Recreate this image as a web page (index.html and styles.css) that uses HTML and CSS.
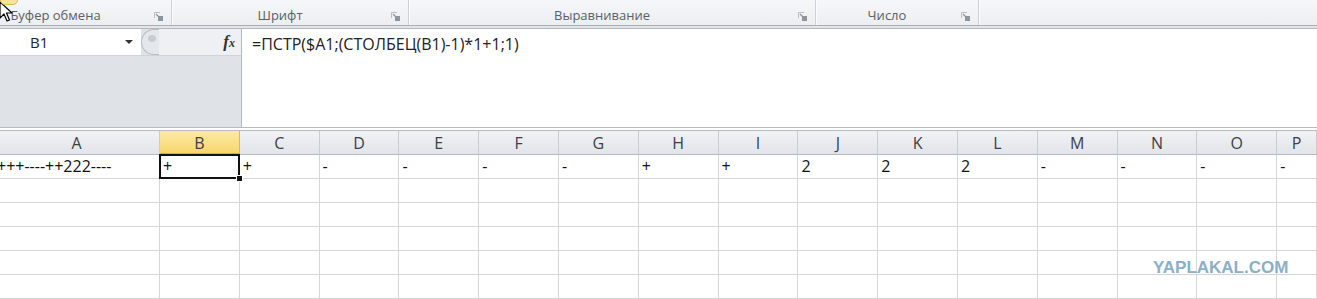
FILE: index.html
```html
<!DOCTYPE html>
<html lang="ru">
<head>
    <meta charset="UTF-8">
    <title>Книга1 - Excel</title>
    <link rel="stylesheet" href="styles.css">
</head>
<body>
    <div class="window">
        <div class="ribbon">
            <div class="group g-clip">
                <span class="group-label">Буфер обмена</span>
                <span class="launcher"><svg width="9" height="9" viewBox="0 0 9 9"><path d="M0.5 6V0.5H6" fill="none" stroke="#b9bec6"/><rect x="4" y="4" width="5" height="5" fill="#8e949c"/><path d="M2 2l4 4" stroke="#8e949c" stroke-width="1.2"/></svg></span>
            </div>
            <div class="group g-font">
                <span class="group-label">Шрифт</span>
                <span class="launcher"><svg width="9" height="9" viewBox="0 0 9 9"><path d="M0.5 6V0.5H6" fill="none" stroke="#b9bec6"/><rect x="4" y="4" width="5" height="5" fill="#8e949c"/><path d="M2 2l4 4" stroke="#8e949c" stroke-width="1.2"/></svg></span>
            </div>
            <div class="group g-align">
                <span class="group-label">Выравнивание</span>
                <span class="launcher"><svg width="9" height="9" viewBox="0 0 9 9"><path d="M0.5 6V0.5H6" fill="none" stroke="#b9bec6"/><rect x="4" y="4" width="5" height="5" fill="#8e949c"/><path d="M2 2l4 4" stroke="#8e949c" stroke-width="1.2"/></svg></span>
            </div>
            <div class="group g-number">
                <span class="group-label">Число</span>
                <span class="launcher"><svg width="9" height="9" viewBox="0 0 9 9"><path d="M0.5 6V0.5H6" fill="none" stroke="#b9bec6"/><rect x="4" y="4" width="5" height="5" fill="#8e949c"/><path d="M2 2l4 4" stroke="#8e949c" stroke-width="1.2"/></svg></span>
            </div>
            <div class="group g-rest"></div>
        </div>

        <div class="formula-bar">
            <div class="fb-left">
                <div class="fb-top">
                    <div class="name-box">
                        <span class="cell-ref">B1</span>
                        <span class="nb-arrow"></span>
                    </div>
                    <div class="splitter"><span class="dot"></span></div>
                    <div class="fx-area"><span class="fx">f<small>x</small></span></div>
                </div>
            </div>
            <div class="fb-input">=ПСТР($A1;(СТОЛБЕЦ(B1)-1)*1+1;1)</div>
        </div>

        <div class="sheet">
            <div class="hd">A</div>
            <div class="hd active">B</div>
            <div class="hd">C</div>
            <div class="hd">D</div>
            <div class="hd">E</div>
            <div class="hd">F</div>
            <div class="hd">G</div>
            <div class="hd">H</div>
            <div class="hd">I</div>
            <div class="hd">J</div>
            <div class="hd">K</div>
            <div class="hd">L</div>
            <div class="hd">M</div>
            <div class="hd">N</div>
            <div class="hd">O</div>
            <div class="hd last">P</div>

            <div class="c first">+++----++222----</div>
            <div class="c selected">+</div>
            <div class="c">+</div>
            <div class="c">-</div>
            <div class="c">-</div>
            <div class="c">-</div>
            <div class="c">-</div>
            <div class="c">+</div>
            <div class="c">+</div>
            <div class="c">2</div>
            <div class="c">2</div>
            <div class="c">2</div>
            <div class="c">-</div>
            <div class="c">-</div>
            <div class="c">-</div>
            <div class="c">-</div>
        </div>

        <div class="watermark">YAPLAKAL.COM</div>
        <svg class="cursor" width="14" height="22" viewBox="0 0 14 22">
            <path d="M1 1v16l4-4 3 7 2.5-1-3-7h5.5z" fill="#fff" stroke="#000" stroke-width="1.2" stroke-linejoin="round"/>
        </svg>
        <div class="paste-tip"></div>
    </div>
    <script>
        // fill the empty rows below row 1
        const sheet = document.querySelector('.sheet');
        for (let r = 0; r < 5; r++) {
            for (let c = 0; c < 16; c++) {
                const cell = document.createElement('div');
                cell.className = 'c';
                sheet.appendChild(cell);
            }
        }
    </script>
</body>
</html>
```

FILE: styles.css
```css
body {
    margin: 0;
    padding: 0;
    overflow: hidden;
    background: #fff;
    font-family: "Open Sans", "Noto Sans", sans-serif;
}

.window {
    position: relative;
    width: 1317px;
    height: 299px;
    overflow: hidden;
}

/* ribbon group captions */
.ribbon {
    display: flex;
    height: 25px;
    background: linear-gradient(#f6f7f9, #eceef2);
    border-bottom: 1px solid #a9aeb5;
    box-shadow: 0 1px 0 #e2e5e9, 0 2px 0 #e2e5e9, 0 3px 0 #b4b8be;
}

.group {
    position: relative;
    display: flex;
    align-items: center;
    justify-content: center;
    padding-right: 20px;
    border-right: 1px solid #cdd1d7;
    box-shadow: 1px 0 0 #fbfcfd;
    box-sizing: border-box;
}

.g-clip { width: 172px; }
.g-font { width: 237px; }
.g-align { width: 407px; }
.g-number { width: 163px; }
.g-rest { flex: 1; border-right: none; }

.group-label {
    font-size: 13px;
    color: #5b5f66;
    padding-top: 5px;
}

.g-clip .group-label { margin-left: -40px; }

.launcher {
    position: absolute;
    right: 8px;
    top: 12px;
    line-height: 0;
}

/* formula bar */
.formula-bar {
    display: flex;
    height: 98px;
    margin-top: 3px;
}

.fb-left {
    width: 241px;
    background: #dfe2e6;
    border-right: 1px solid #b3b8be;
}

.fb-top {
    display: flex;
    height: 26px;
    border-bottom: 1px solid #d0d4d9;
}

.name-box {
    position: relative;
    width: 141px;
    background: #fff;
    display: flex;
    align-items: center;
}

.cell-ref {
    font-size: 15px;
    color: #222;
    margin-left: 30px;
}

.nb-arrow {
    position: absolute;
    right: 8px;
    top: 11px;
    border-left: 4px solid transparent;
    border-right: 4px solid transparent;
    border-top: 4px solid #333;
}

.splitter {
    width: 18px;
    background: #e4e7eb;
    border: 1px solid #b8bdc4;
    border-right: none;
    border-radius: 13px 0 0 13px;
    box-sizing: border-box;
    position: relative;
}

.splitter .dot {
    position: absolute;
    left: 6px;
    top: 5px;
    width: 8px;
    height: 7px;
    border-radius: 50%;
    background: #c8ccd2;
}

.fx-area {
    flex: 1;
    background: #eef0f3;
    display: flex;
    align-items: center;
    justify-content: flex-end;
    padding-right: 6px;
}

.fx {
    font-family: "Liberation Serif", serif;
    font-style: italic;
    font-weight: bold;
    font-size: 17px;
    color: #333;
}

.fx small {
    font-size: 12px;
}

.fb-input {
    flex: 1;
    background: #fff;
    font-size: 16px;
    color: #222;
    padding: 4px 0 0 10px;
}

/* worksheet */
.sheet {
    display: grid;
    grid-template-columns: 160px repeat(14, 79.8px) 1fr;
    grid-auto-rows: 24px;
    border-top: 1px solid #b7bbc0;
    box-shadow: 0 -2px 0 #ffffff, 0 -3px 0 #b7bbc0;
    margin-top: 3px;
}

.hd {
    display: flex;
    align-items: center;
    justify-content: center;
    background: linear-gradient(#f0f2f4, #e2e5e9);
    border-right: 1px solid #c9cdd2;
    border-bottom: 1px solid #b5b9bf;
    font-size: 16px;
    color: #3c3f44;
    padding-top: 1px;
    box-sizing: border-box;
}

.hd:first-child { text-indent: -6px; }

.hd.active {
    background: linear-gradient(#fbeaa6, #f8d66c);
    border-right-color: #e2b84c;
    border-bottom: 2px solid #e0a93a;
}

.c {
    border-right: 1px solid #d6d6d6;
    border-bottom: 1px solid #d6d6d6;
    font-size: 16px;
    color: #111;
    padding-left: 3px;
    line-height: 23px;
    white-space: nowrap;
    overflow: hidden;
    box-sizing: border-box;
}

.c.first {
    padding-left: 0;
    text-indent: -3px;
}

.selected {
    position: relative;
    overflow: visible;
}

.selected::before {
    content: "";
    position: absolute;
    left: -1px;
    top: -1px;
    right: -1px;
    bottom: -1px;
    border: 2px solid #111;
}

.selected::after {
    content: "";
    position: absolute;
    right: -4px;
    bottom: -4px;
    width: 5px;
    height: 5px;
    background: #111;
    border: 1px solid #fff;
}

.watermark {
    position: absolute;
    left: 1153px;
    top: 258px;
    font-family: "Liberation Sans", Arial, sans-serif;
    font-weight: bold;
    font-size: 17px;
    color: #8bafc8;
}

.cursor {
    position: absolute;
    left: -1px;
    top: 1px;
}

.paste-tip {
    position: absolute;
    left: 0;
    top: -6px;
    width: 16px;
    height: 9px;
    border-radius: 0 0 5px 5px;
    background: #f9e49a;
    border: 1px solid #d9b95c;
}
```
